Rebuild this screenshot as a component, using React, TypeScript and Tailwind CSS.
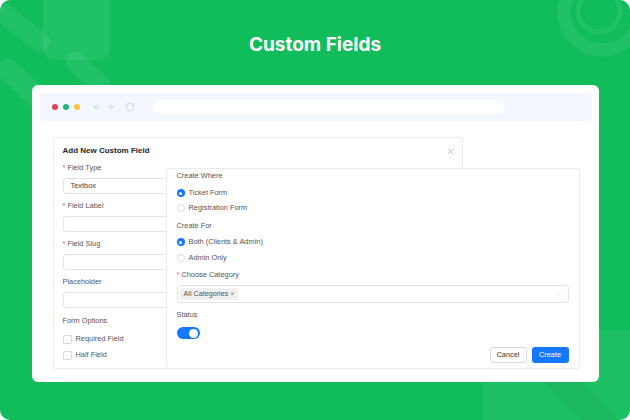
import React from "react";
import { RotateCw, X, ChevronDown, ArrowLeft, ArrowRight } from "lucide-react";

const font = { fontFamily: '"Liberation Sans", Arial, sans-serif' };

function Label({ text, req }: { text: string; req?: boolean }) {
  return (
    <div className="h-[12px] leading-[12px] text-[7.4px] text-[#555]">
      {req && <span className="text-[#ff4d4f] mr-[2px]">*</span>}
      {text}
    </div>
  );
}

function Input({ value }: { value?: string }) {
  return (
    <div className="h-[16px] border border-[#e3e3e3] rounded-[3px] pl-[7px] flex items-center text-[7.4px] text-[#444]">
      {value}
    </div>
  );
}

function Radio({ checked, text }: { checked?: boolean; text: string }) {
  return (
    <div className="h-[12px] flex items-center gap-[4px] text-[7.4px] text-[#555]">
      {checked ? (
        <div className="w-[8px] h-[8px] rounded-full bg-[#1677ff] flex items-center justify-center">
          <div className="w-[3px] h-[3px] rounded-full bg-white" />
        </div>
      ) : (
        <div className="w-[8px] h-[8px] rounded-full border border-[#d9d9d9] bg-white" />
      )}
      <span>{text}</span>
    </div>
  );
}

function Check({ text }: { text: string }) {
  return (
    <div className="h-[12px] flex items-center gap-[4px] text-[7.4px] text-[#555]">
      <div className="w-[9px] h-[9px] rounded-[2px] border border-[#d9d9d9] bg-white" />
      <span>{text}</span>
    </div>
  );
}

export default function App() {
  return (
    <div className="w-[630px] h-[420px] bg-white">
      <div
        className="relative w-[630px] h-[420px] overflow-hidden rounded-[10px] bg-[#11bd5b] flex flex-col items-center"
        style={font}
      >
        <svg className="absolute inset-0" width="630" height="420" viewBox="0 0 630 420">
          <g fill="#ffffff" fillOpacity="0.07">
            <rect x="43" y="-20" width="67" height="80" rx="12" />
          </g>
          <g stroke="#ffffff" strokeOpacity="0.07" strokeLinecap="round" fill="none">
            <line x1="2" y1="12" x2="40" y2="42" strokeWidth="20" />
            <line x1="8" y1="70" x2="68" y2="125" strokeWidth="22" />
            <line x1="76" y1="62" x2="100" y2="85" strokeWidth="20" />
            <circle cx="602" cy="12" r="38" strokeWidth="13" strokeDasharray="170 70" transform="rotate(-20 602 12)" />
            <circle cx="599" cy="11" r="21" strokeWidth="5" />
          </g>
          <g fill="#ffffff" fillOpacity="0.05">
            <rect x="483" y="330" width="160" height="100" />
          </g>
          <g stroke="#000000" strokeOpacity="0.04" strokeLinecap="round">
            <line x1="560" y1="380" x2="610" y2="430" strokeWidth="26" />
          </g>
        </svg>

        <div
          className="relative mt-[34px] h-[22px] leading-[22px] text-[19px] font-bold text-white"
          style={{ fontFamily: "Inter, sans-serif" }}
        >
          Custom Fields
        </div>

        <div className="relative mt-[29px] w-[567px] h-[297px] bg-white rounded-[6px] p-[8px] pb-0">
          {/* browser bar */}
          <div className="h-[28px] bg-[#f4f7fd] rounded-[3px] flex items-center pl-[12px]">
            <div className="flex items-center gap-[5px]">
              <div className="w-[6px] h-[6px] rounded-full bg-[#e0445a]" />
              <div className="w-[6px] h-[6px] rounded-full bg-[#1fb57a]" />
              <div className="w-[6px] h-[6px] rounded-full bg-[#f5c53a]" />
            </div>
            <div className="ml-[12px] flex items-center gap-[3px]">
              <ArrowLeft size={10} color="#b8bfcb" strokeWidth={1.4} />
              <ArrowRight size={10} color="#b8bfcb" strokeWidth={1.4} />
            </div>
            <RotateCw className="ml-[10px]" size={10} color="#b8bfcb" strokeWidth={1.5} />
            <div className="ml-[18px] w-[352px] h-[14px] bg-white rounded-full" />
          </div>

          {/* content */}
          <div className="relative mt-[16px] ml-[13px] w-[410px] h-[232px]">
            <div className="w-[410px] h-[232px] border border-[#ebebeb] rounded-[3px] bg-white px-[9px] pt-[8px]">
              <div className="flex items-center justify-between h-[10px]">
                <div className="text-[8px] font-bold text-[#262626] leading-[10px]">Add New Custom Field</div>
                <X size={9} color="#999" strokeWidth={1.5} className="mr-[-2px]" />
              </div>
              <div className="mt-[6px]">
                <Label text="Field Type" req />
                <div className="mt-[4px]"><Input value="Textbox" /></div>
                <div className="mt-[6px]"><Label text="Field Label" req /></div>
                <div className="mt-[4px]"><Input /></div>
                <div className="mt-[6px]"><Label text="Field Slug" req /></div>
                <div className="mt-[4px]"><Input /></div>
                <div className="mt-[6px]"><Label text="Placeholder" /></div>
                <div className="mt-[4px]"><Input /></div>
                <div className="mt-[7px]"><Label text="Form Options" /></div>
                <div className="mt-[6px]"><Check text="Required Field" /></div>
                <div className="mt-[4px]"><Check text="Half Field" /></div>
              </div>
            </div>

            {/* overlay panel */}
            <div className="absolute left-[113px] top-[31px] w-[414px] h-[201px] bg-white border border-[#ebebeb] rounded-[3px] pl-[10px] pr-[10px] pt-[1px] flex flex-col">
              <Label text="Create Where" />
              <div className="mt-[5px]"><Radio checked text="Ticket Form" /></div>
              <div className="mt-[3px]"><Radio text="Registration Form" /></div>
              <div className="mt-[6px]"><Label text="Create For" /></div>
              <div className="mt-[4px]"><Radio checked text="Both (Clients & Admin)" /></div>
              <div className="mt-[4px]"><Radio text="Admin Only" /></div>
              <div className="mt-[5px]"><Label text="Choose Category" req /></div>
              <div className="mt-[4px] h-[18px] border border-[#e3e3e3] rounded-[3px] flex items-center pl-[2px] pr-[5px] justify-between">
                <div className="h-[12px] w-[58px] bg-[#f0f0f0] rounded-[2px] flex items-center pl-[4px] gap-[2px] text-[7.2px] text-[#555]">
                  <span>All Categories</span>
                  <span className="text-[#888] text-[7px]">×</span>
                </div>
                <ChevronDown size={8} color="#c4c4c4" strokeWidth={1.5} />
              </div>
              <div className="mt-[6px]"><Label text="Status" /></div>
              <div className="mt-[6px] w-[23px] h-[12px] rounded-full bg-[#1677ff] flex items-center justify-end pr-[1.5px]">
                <div className="w-[9px] h-[9px] rounded-full bg-white" />
              </div>
              <div className="mt-[8px] flex justify-end gap-[5px]">
                <div className="w-[37px] h-[16px] border border-[#d9d9d9] rounded-[3px] flex items-center justify-center text-[7.4px] text-[#333]">
                  Cancel
                </div>
                <div className="w-[37px] h-[16px] bg-[#1677ff] rounded-[3px] flex items-center justify-center text-[7.4px] text-white">
                  Create
                </div>
              </div>
            </div>
          </div>
        </div>
      </div>
    </div>
  );
}
